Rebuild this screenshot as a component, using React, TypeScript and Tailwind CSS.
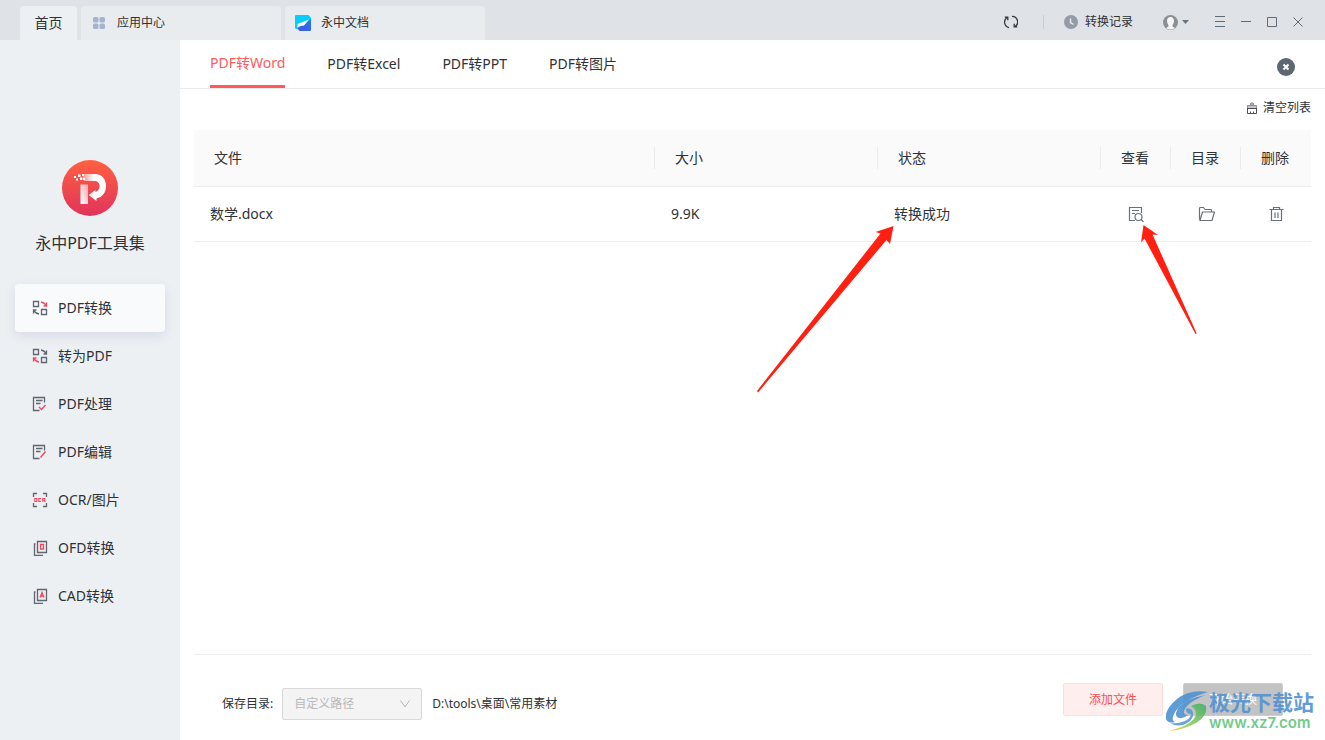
import { ReactNode } from "react";

const GRAY = "#5f666f";
const RED = "#f5455f";

const menu = [
  { label: "PDF转换", icon: <ConvertIcon top={RED} bottom={GRAY} /> },
  { label: "转为PDF", icon: <ConvertIcon top={GRAY} bottom={RED} /> },
  { label: "PDF处理", icon: <NoteIcon mark="M7 11l2.5 2.5L13.5 9" /> },
  { label: "PDF编辑", icon: <NoteIcon mark="M8.5 13.5L13.5 7.5" /> },
  { label: "OCR/图片", icon: <OcrIcon /> },
  { label: "OFD转换", icon: <PagesIcon mark="M7 3.5h3v4.5h-3z" /> },
  { label: "CAD转换", icon: <PagesIcon mark="M6.5 8.5L8.5 3.5L10.5 8.5M7 7h3" /> },
];

const tabs = ["PDF转Word", "PDF转Excel", "PDF转PPT", "PDF转图片"];

export default function App() {
  return (
    <div className="flex min-h-screen flex-col bg-white font-['Noto_Sans','Noto_Sans_CJK_SC',sans-serif] text-sm text-[#2e3136]">
      <TitleBar />
      <div className="flex flex-1">
        <Sidebar />
        <main className="flex min-w-0 flex-1 flex-col">
          {/* Tabs */}
          <div className="flex h-[49px] items-center justify-between border-b border-[#e8eaef] px-[30px]">
            <nav className="flex h-full gap-[42px]">
              {tabs.map((tab, i) => (
                <button
                  key={tab}
                  className={
                    i === 0
                      ? "h-12 border-b-[3px] border-[#ff5a5a] text-[#ff5a5a]"
                      : "h-12"
                  }
                >
                  {tab}
                </button>
              ))}
            </nav>
            <button aria-label="关闭" className="mt-1.5">
              <svg width="18" height="18" viewBox="0 0 18 18">
                <circle cx="9" cy="9" r="9" fill="#5d6873" />
                <path d="M6.5 6.5l5 5M11.5 6.5l-5 5" stroke="#fff" strokeWidth="2" />
              </svg>
            </button>
          </div>

          <div className="flex flex-1 flex-col px-[14px]">
            <div className="flex h-[41px] items-center justify-end pb-1">
              <button className="flex items-center gap-[5px] text-xs">
                <BrushIcon />
                清空列表
              </button>
            </div>
            <FileTable />
            <Footer />
          </div>
        </main>
      </div>
    </div>
  );
}

function TitleBar() {
  return (
    <header className="flex h-10 items-end justify-between bg-[#dfe2e7] pl-5">
      <div className="flex h-[34px] gap-1">
        <button className="w-[57px] rounded-t bg-[#edf0f3]">首页</button>
        <button className="flex w-[200px] items-center gap-3 rounded-t bg-[#e8ecee] px-3 text-xs">
          <svg width="12" height="12" viewBox="0 0 12 12" fill="#a5b4cd">
            <rect width="5.5" height="5.5" rx="1.5" />
            <rect x="6.5" width="5.5" height="5.5" rx="1.5" />
            <rect y="6.5" width="5.5" height="5.5" rx="1.5" />
            <rect x="6.5" y="6.5" width="5.5" height="5.5" rx="1.5" />
          </svg>
          应用中心
        </button>
        <button className="flex w-[200px] items-center gap-[10px] rounded-t bg-[#e8ecee] px-[10px] text-xs">
          <svg width="16" height="16" viewBox="0 0 16 16">
            <defs>
              <linearGradient id="doc" x1="1" y1="0" x2="0" y2="1">
                <stop offset="0" stopColor="#1b7df0" />
                <stop offset="1" stopColor="#4a52d8" />
              </linearGradient>
            </defs>
            <path d="M0 1q0-1 1-1h12.5l2.5 2.5v2L3 14H1.5Q0 14 0 12.5z" fill="#08cdf8" />
            <path d="M16 4v11q0 1-1 1H4.5L2.500 13.5z" fill="url(#doc)" />
            <path d="M14 4.5L2.5 9v3.500l2.500-1.500 4-.5z" fill="#fff" />
          </svg>
          永中文档
        </button>
      </div>

      <div className="flex h-10 items-center pt-1 pr-[21px] text-xs">
        <button aria-label="刷新">
          <svg width="14" height="14" viewBox="0 0 14 14" fill="none" stroke="#33383e" strokeWidth="1.3">
            <path d="M5 12.6A5.6 5.6 0 0 1 3 2.5M0.8 2.2h3v3" />
            <path d="M8 1.3A5.6 5.6 0 0 1 11.2 11.5M13.2 11.8h-3v-3" />
          </svg>
        </button>
        <span className="ml-[25px] h-[14px] w-px bg-[#c9cdd3]" />
        <button className="ml-5 flex items-center gap-[7px]">
          <svg width="14" height="14" viewBox="0 0 14 14">
            <circle cx="7" cy="7" r="7" fill="#949ba6" />
            <path d="M6.5 3.5v4l3 2" fill="none" stroke="#e8ebef" strokeWidth="1.5" />
          </svg>
          转换记录
        </button>
        <button aria-label="用户" className="ml-[30px] flex items-center gap-1">
          <svg width="15" height="15" viewBox="0 0 15 15">
            <circle cx="7.5" cy="7.5" r="7.5" fill="#8e8f92" />
            <path d="M7.5 2C5 2 4 3.7 4 6q0 2.5 1.5 4v1.5L3 13q4.5 3 9 0l-2.5-1.5V10Q11 8.5 11 6c0-2.3-1-4-3.5-4z" fill="#f6f6f6" />
          </svg>
          <svg width="7" height="4" viewBox="0 0 7 4">
            <path d="M0 0h7L3.5 4z" fill="#6a7682" />
          </svg>
        </button>
        <div className="ml-[25px] flex gap-[14px]">
          <WindowButton label="菜单" d="M1 .5h10M1 5.5h10M1 10.5h10" />
          <WindowButton label="最小化" d="M1 5.5h10" />
          <WindowButton label="最大化" d="M1.5 1.5h9v9h-9z" />
          <WindowButton label="退出" d="M1.5 1.5l9 9M10.5 1.5l-9 9" />
        </div>
      </div>
    </header>
  );
}

function WindowButton({ label, d }: { label: string; d: string }) {
  return (
    <button aria-label={label}>
      <svg width="12" height="12" viewBox="0 0 12 12" fill="none" stroke="#5f6b77">
        <path d={d} />
      </svg>
    </button>
  );
}

function Sidebar() {
  return (
    <aside className="w-[180px] shrink-0 bg-[#edf0f3] pt-[120px]">
      <div className="flex flex-col items-center gap-4">
        <Logo />
        <h1 className="text-base leading-[22px]">永中PDF工具集</h1>
      </div>
      <nav className="mt-[30px] flex flex-col px-[15px]">
        {menu.map((item, i) => (
          <button
            key={item.label}
            className={
              i === 0
                ? "flex h-12 items-center gap-[10px] rounded bg-[#f9fafc] pl-[17px] shadow-[0_4px_12px_#d5dbe8]"
                : "flex h-12 items-center gap-[10px] pl-[17px]"
            }
          >
            {item.icon}
            {item.label}
          </button>
        ))}
      </nav>
    </aside>
  );
}

function FileTable() {
  return (
    <table className="w-full table-fixed text-left">
      <thead className="bg-[#fafafa]">
        <tr className="h-14 border-b border-[#ededed]">
          <Th>文件</Th>
          <Th width="w-[223px]">大小</Th>
          <Th width="w-[223px]">状态</Th>
          <Th width="w-[70px]">查看</Th>
          <Th width="w-[70px]">目录</Th>
          <Th width="w-[70px]" last>
            删除
          </Th>
        </tr>
      </thead>
      <tbody>
        <tr className="h-[55px] border-b border-[#ededed]">
          <td className="px-4">数学.docx</td>
          <td className="px-4">9.9K</td>
          <td className="relative px-4">
            转换成功
            <svg className="absolute top-[39px] -left-[121px]" width="137" height="167" viewBox="0 0 137 167">
              <path d="M136.5 0L118.5 6l5 1.5L0 165l1 1.5L129.5 14l3.5 4z" fill="#ff2012" />
            </svg>
          </td>
          <td className="relative">
            <IconButton label="查看">
              <path d="M7 14.5H1.5v-13h12V7M4 4.5h7M4 7.5h3" />
              <circle cx="10.5" cy="11" r="3.5" />
              <path d="M13 13.5l2.5 2.5" />
            </IconButton>
            <svg className="absolute top-[38px] left-10" width="56" height="110" viewBox="0 0 56 110">
              <path d="M2.5 0L0 17.5l3.5-4L54.5 109l1.2-.6L11.5 9.5l5.5.5z" fill="#ff2012" />
            </svg>
          </td>
          <td>
            <IconButton label="打开目录">
              <path d="M1.5 13.5v-11q0-1 1-1h3l1.5 2h6q.5 0 .5 1v1.5M2 14.5L4.5 6h12l-2.5 8.5z" />
            </IconButton>
          </td>
          <td>
            <IconButton label="删除">
              <path d="M1.5 3.5h14M5.5 3.5v-2h6v2M3.5 3.5v11h10v-11M7 6.5v5.5M10 6.5v5.5" />
            </IconButton>
          </td>
        </tr>
      </tbody>
    </table>
  );
}

function Th({
  children,
  width = "",
  last = false,
}: {
  children: ReactNode;
  width?: string;
  last?: boolean;
}) {
  return (
    <th className={`${width} p-0 font-normal`}>
      <div
        className={`pl-5 leading-[22px] ${last ? "" : "border-r border-[#ebebeb]"}`}
      >
        {children}
      </div>
    </th>
  );
}

function IconButton({ label, children }: { label: string; children: ReactNode }) {
  return (
    <button aria-label={label} className="ml-[27px] block">
      <svg width="17" height="16" viewBox="0 0 17 16" fill="none" stroke="#67717c" strokeWidth="1.2">
        {children}
      </svg>
    </button>
  );
}

function Footer() {
  return (
    <footer className="relative mt-auto flex h-[86px] items-center justify-between border-t border-[#ededed] px-7 pt-1 text-xs">
      <div className="flex items-center pt-[9px]">
        <label htmlFor="path">保存目录:</label>
        <div className="relative ml-[9px]">
          <select
            id="path"
            disabled
            className="h-8 w-[140px] appearance-none rounded-xs border border-[#d9d9d9] bg-[#f4f4f4] px-[11px] text-[#b8b8b8] opacity-100"
          >
            <option>自定义路径</option>
          </select>
          <svg className="pointer-events-none absolute top-3 right-3" width="10" height="8" viewBox="0 0 10 8" fill="none" stroke="#b5b5b5">
            <path d="M.5 .5L5 7 9.5 .5" />
          </svg>
        </div>
        <span className="ml-[10px]">D:\tools\桌面\常用素材</span>
      </div>
      <div className="flex gap-5">
        <button className="h-[33px] w-[100px] rounded-xs border border-[#ffdcdc] bg-[#ffeeee] text-[#ff4d4f]">
          添加文件
        </button>
        <button className="h-[33px] w-[100px] rounded-xs border border-[#cdcdcd] bg-[#c3c3c3] text-white">
          开始转换
        </button>
      </div>
      <Watermark />
    </footer>
  );
}

function Watermark() {
  return (
    <div className="pointer-events-none absolute -right-[3px] bottom-2 flex items-center opacity-90">
      <svg width="43" height="42" viewBox="0 0 43 42">
        <defs>
          <linearGradient id="leaf" x1="1" y1="0" x2="0" y2="1">
            <stop offset="0" stopColor="#3fae6c" />
            <stop offset=".6" stopColor="#8fce62" />
            <stop offset="1" stopColor="#f3cf4a" />
          </linearGradient>
        </defs>
        <path d="M42 2Q24-1 11 9Q-2 20 0 29Q2 34 9 32Q5 31 8 24Q15 10 42 2z" fill="#4e93d3" />
        <path d="M40 5Q21 8 13 17Q8 24 11 27Q16 30 22 25Q17 25 18 21Q21 12 40 5z" fill="#4e93d3" />
        <path d="M20 19Q20 24 25 24Q25 29 16 32Q10 34 4 33Q14 39 24 31Q29 26 26 20Q22 17 20 19z" fill="#5b9bd5" />
        <path d="M25 16Q34 11 40 16Q42 26 30 33Q17 40 3 41Q22 36 28 29Q33 21 25 16z" fill="url(#leaf)" />
      </svg>
      <div className="flex flex-col">
        <span className="text-[21px] leading-6 font-bold text-[#5292d2]">极光下载站</span>
        <span className="font-['Inter',sans-serif] text-[15px] leading-[18px] font-semibold text-[#62c57c]">
          www.xz7.com
        </span>
      </div>
    </div>
  );
}

function Logo() {
  return (
    <svg width="56" height="56" viewBox="0 0 56 56">
      <defs>
        <linearGradient id="disc" x1="0" y1="0" x2="0" y2="1">
          <stop offset="0" stopColor="#ff6040" />
          <stop offset="1" stopColor="#e0345c" />
        </linearGradient>
        <linearGradient id="bowl" x1="0" y1="0" x2="1" y2="0">
          <stop offset="0" stopColor="#fff" stopOpacity=".35" />
          <stop offset=".5" stopColor="#fff" />
        </linearGradient>
        <linearGradient id="stem" x1="1" y1="0" x2="0" y2=".8">
          <stop offset="0" stopColor="#fff" stopOpacity=".5" />
          <stop offset="1" stopColor="#fff" />
        </linearGradient>
      </defs>
      <circle cx="28" cy="28" r="28" fill="url(#disc)" />
      <path d="M18.5 24.5H26v19.5h-7.5z" fill="url(#stem)" />
      <path d="M20 14h13c7 0 11 5 11 12 0 7-4 11-9.500 12.500v2.500L26.500 35l7-5v2c3-1 4-3.500 4-6 0-3.500-2-5-5-5H22z" fill="url(#bowl)" />
      <path d="M12 16h2v2h-2zM14 18.5h2v2h-2zM16 14.5h2.5V17H16zM18 17.5h2.5V20H18zM20 14h2v2h-2zM21 18h2v2h-2z" fill="#fff" />
    </svg>
  );
}

function BrushIcon() {
  return (
    <svg width="12" height="12" viewBox="0 0 12 12" fill="none" stroke="#4b5058">
      <path d="M4.5 3.5V1.5q1.5-1.5 3 0v2" stroke="#8f8f8f" fill="#b5b5b5" />
      <path d="M1.5 6.5v-3h9v3z" stroke="#8f8f8f" fill="#c5c5c5" />
      <path d="M1 6.5h10M1.5 6.5v5h9v-5M4.5 11.5v-2M7.5 11.5v-2" />
    </svg>
  );
}

function ConvertIcon({ top, bottom }: { top: string; bottom: string }) {
  return (
    <svg width="16" height="16" viewBox="0 0 16 16" fill="none" stroke={GRAY} strokeWidth="1.3">
      <path d="M1.5 1.5h5v5h-5zM9.5 9.5h5v5h-5z" />
      <path d="M9 2q3 .5 5 3M14.5 2.5v3.5h-3" stroke={top} />
      <path d="M7 14q-3-.5-5-3M1.5 13.5V10h3" stroke={bottom} />
    </svg>
  );
}

function NoteIcon({ mark }: { mark: string }) {
  return (
    <svg width="16" height="16" viewBox="0 0 16 16" fill="none" stroke={GRAY} strokeWidth="1.3">
      <path d="M12.5 6.5v-5h-11v13h6M4 4.5h6.5M4 7.5h4.5" />
      <path d={mark} stroke={RED} strokeWidth="1.4" />
    </svg>
  );
}

function OcrIcon() {
  return (
    <svg width="16" height="16" viewBox="0 0 16 16" fill="none" stroke={GRAY} strokeWidth="1.3">
      <path d="M1.5 5V1.5H5M11 1.5h3.5V5M14.5 11v3.5H11M5 14.5H1.5V11" />
      <path d="M2.8 6.5h2v3h-2zM9 6.5H6.8v3H9M10.8 10V6.5h2v1.8h-2M12 8.3l1.3 1.5" stroke={RED} strokeWidth="1.1" />
    </svg>
  );
}

function PagesIcon({ mark }: { mark: string }) {
  return (
    <svg width="16" height="16" viewBox="0 0 16 16" fill="none" stroke={GRAY} strokeWidth="1.3">
      <path d="M5.5 1.5h9v11h-9zM3.5 4h-1v11.5h8.5" />
      <path d={mark} transform="translate(1.5 1)" stroke={RED} />
    </svg>
  );
}
